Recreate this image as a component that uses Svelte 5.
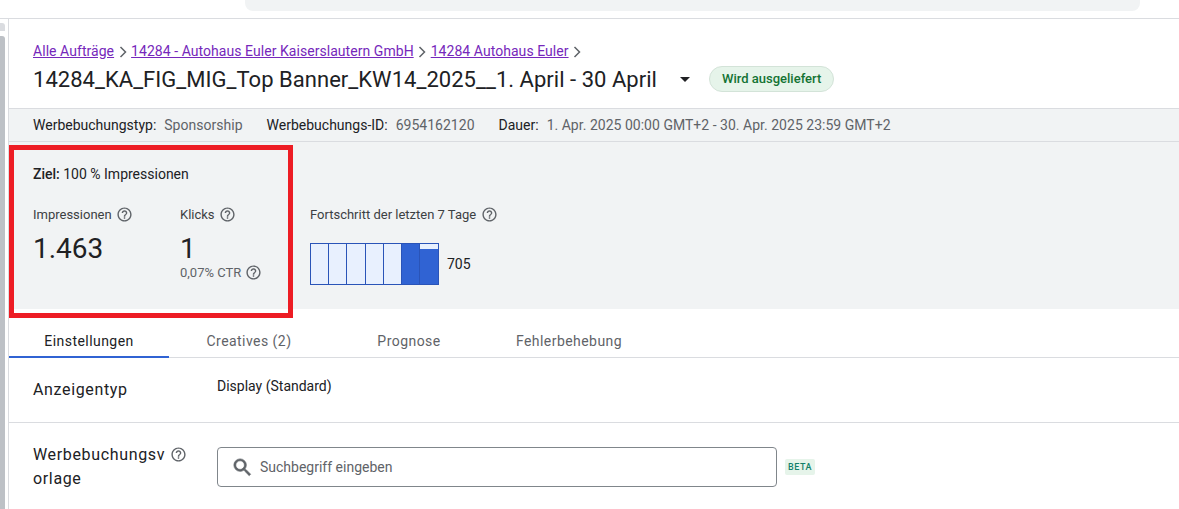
<script lang="ts">
  const crumbs = ["Alle Aufträge", "14284 - Autohaus Euler Kaiserslautern GmbH", "14284 Autohaus Euler"];
  const tabs = ["Einstellungen", "Creatives (2)", "Prognose", "Fehlerbehebung"];
  // last 7 days, share of the bar that is filled
  const days = [0, 0, 0, 0, 0, 100, 87];
</script>

{#snippet help(size = 17)}
  <svg class="help" width={size} height={size} viewBox="0 0 24 24" fill="#5f6368" aria-hidden="true">
    <path d="M11 18h2v-2h-2v2zm1-16C6.48 2 2 6.48 2 12s4.48 10 10 10 10-4.48 10-10S17.52 2 12 2zm0 18c-4.41 0-8-3.59-8-8s3.59-8 8-8 8 3.59 8 8-3.59 8-8 8zm0-14c-2.21 0-4 1.79-4 4h2c0-1.1.9-2 2-2s2 .9 2 2c0 2-3 1.75-3 5h2c0-2.25 3-2.5 3-5 0-2.21-1.79-4-4-4z" />
  </svg>
{/snippet}

<div class="page">
  <div class="topbar"><div class="pill"></div></div>
  <div class="body">
    <div class="rail"><div class="nub"></div><div class="thumb"></div></div>
    <main>
      <header>
        <nav>
          {#each crumbs as c}
            <a href="#top">{c}</a>
            <svg width="12" height="12" viewBox="0 0 12 12" fill="none" stroke="#5f6368" stroke-width="1.5"><path d="M3.5 1 8.5 6l-5 5" /></svg>
          {/each}
        </nav>
        <div class="title-row">
          <h1>14284_KA_FIG_MIG_Top Banner_KW14_2025__1. April - 30 April</h1>
          <span class="caret"></span>
          <span class="status">Wird ausgeliefert</span>
        </div>
      </header>

      <div class="meta">
        <span class="pair"><b>Werbebuchungstyp:</b><i>Sponsorship</i></span>
        <span class="pair"><b>Werbebuchungs-ID:</b><i>6954162120</i></span>
        <span class="pair"><b>Dauer:</b><i>1. Apr. 2025 00:00 GMT+2 - 30. Apr. 2025 23:59 GMT+2</i></span>
      </div>

      <section class="stats">
        <div class="goal">
          <p class="target"><strong>Ziel:</strong> 100 % Impressionen</p>
          <div class="figures">
            <div class="fig imp">
              <div class="fig-label">Impressionen {@render help()}</div>
              <div class="fig-value">1.463</div>
            </div>
            <div class="fig">
              <div class="fig-label">Klicks {@render help()}</div>
              <div class="fig-value">1</div>
              <div class="ctr">0,07% CTR {@render help()}</div>
            </div>
          </div>
        </div>
        <div class="progress">
          <div class="fig-label wide">Fortschritt der letzten 7 Tage {@render help()}</div>
          <div class="chart-row">
            <div class="chart">
              {#each days as d}
                <div class="day"><div class="fill" style="height: {d}%"></div></div>
              {/each}
            </div>
            <span class="count">705</span>
          </div>
        </div>
      </section>

      <div class="tabs">
        {#each tabs as t, i}
          <div class="tab" class:active={i === 0}>{t}</div>
        {/each}
      </div>

      <div class="row first">
        <div class="row-label">Anzeigentyp</div>
        <div class="row-value">Display (Standard)</div>
      </div>
      <div class="row second">
        <div class="row-label">
          Werbebuchungsv <span class="inline-help">{@render help()}</span><br />orlage
        </div>
        <div class="search">
          <svg width="23" height="23" viewBox="0 0 24 24" fill="#5f6368" stroke="#5f6368" stroke-width="0.7"><path d="M15.5 14h-.79l-.28-.27A6.47 6.47 0 0 0 16 9.5 6.5 6.5 0 1 0 9.5 16c1.61 0 3.09-.59 4.23-1.57l.27.28v.79l5 4.99L20.49 19l-4.99-5zm-6 0C7.01 14 5 11.99 5 9.5S7.01 5 9.5 5 14 7.01 14 9.5 11.99 14 9.5 14z" /></svg>
          <span>Suchbegriff eingeben</span>
        </div>
        <span class="beta">BETA</span>
      </div>
    </main>
  </div>
  <div class="callout"></div>
</div>

<style>
  :global(body) { margin: 0; background: #fff; }
  .page {
    position: relative;
    height: 509px;
    overflow: hidden;
    font-family: Roboto, "Liberation Sans", sans-serif;
    font-size: 14px;
    color: #202124;
  }
  .topbar { height: 18px; border-bottom: 1px solid #dadce0; padding-left: 245px; padding-right: 39px; }
  .pill { height: 11px; background: #f1f3f4; border-radius: 0 0 8px 8px; }
  .body { display: flex; height: 490px; }
  .rail { width: 8px; flex: none; display: flex; flex-direction: column; gap: 5px; padding-top: 4px; box-sizing: border-box; }
  .nub { width: 5px; height: 8px; background: #dadce0; border-radius: 0 3px 0 0; }
  .thumb { width: 5px; flex: 1; background: #bdc1c6; border-radius: 0 3px 0 0; }
  main { flex: 1; min-width: 0; border-left: 1px solid #dadce0; }

  header { height: 89px; box-sizing: border-box; padding: 24px 24px 0; }
  nav { display: flex; align-items: center; gap: 2.5px; height: 16px; font-size: 14px; letter-spacing: 0.05px; }
  nav a { color: #7627bb; text-decoration: underline; white-space: nowrap; }
  nav svg { margin-top: 1px; }
  .title-row { display: flex; align-items: center; height: 32px; margin-top: 4px; }
  h1 { margin: 0; font-size: 22px; font-weight: 400; white-space: nowrap; letter-spacing: 0.03px; }
  .caret { width: 0; height: 0; margin: 0 19px 0 23px; border: 5px solid transparent; border-top-color: #202124; border-bottom: 0; }
  .status {
    height: 24px; line-height: 24px; padding: 0 12px;
    background: #e6f4ea; border: 1px solid #d3e3d8; border-radius: 13px;
    color: #137333; font-size: 13px; font-weight: 500;
  }

  .meta {
    display: flex; align-items: center; gap: 24px;
    height: 32px; padding-left: 24px;
    background: #f1f3f4;
    border-top: 1px solid #dadce0; border-bottom: 1px solid #dadce0;
  }
  .pair { display: flex; gap: 8px; }
  .pair b { font-weight: 400; color: #202124; }
  .pair i { font-style: normal; color: #5f6368; letter-spacing: 0.02px; }

  .stats { display: flex; height: 167px; background: #f1f3f4; }
  .goal { width: 277px; flex: none; box-sizing: border-box; padding: 24px 0 0 24px; }
  .target { margin: 0; line-height: 16px; }
  .target strong { font-weight: 500; }
  .figures { display: flex; margin-top: 24px; }
  .fig.imp { width: 147px; }
  .fig-label { display: flex; align-items: center; gap: 4px; height: 16px; font-size: 13px; color: #3c4043; }
  .fig-label.wide { gap: 5px; }
  .fig-value { font-size: 28px; line-height: 36px; margin-top: 9px; }
  .ctr { display: flex; align-items: center; gap: 4px; font-size: 13px; color: #5f6368; height: 16px; margin-top: -3px; }
  .help { flex: none; }
  .progress { padding: 64px 0 0 24px; }
  .chart-row { display: flex; align-items: center; gap: 8px; margin-top: 21px; }
  .chart { display: flex; height: 42px; box-sizing: border-box; border: 1px solid #2a54b8; }
  .day { width: 17px; height: 100%; background: #e8f0fe; border-left: 1px solid #2a54b8; display: flex; align-items: flex-end; }
  .day:first-child { border-left: 0; }
  .day:nth-child(3), .day:last-child { width: 18px; }
  .fill { width: 100%; background: #3063d3; }
  .count { font-size: 14px; }

  .tabs { display: flex; height: 49px; box-sizing: border-box; border-bottom: 1px solid #dadce0; }
  .tab {
    width: 160px; box-sizing: border-box; height: 49px; padding-top: 24px;
    text-align: center; font-size: 14px; font-weight: 450; color: #5f6368; letter-spacing: 0.45px;
  }
  .tab.active { color: #202124; border-bottom: 2px solid #3063d3; }

  .row { display: flex; border-bottom: 1px solid #dadce0; padding-left: 24px; }
  .row.first { height: 64px; }
  .row.second { border-bottom: 0; padding-top: 24px; }
  .row-label { width: 184px; flex: none; font-size: 16px; font-weight: 450; line-height: 24px; letter-spacing: 0.65px; }
  .row.first .row-label { padding-top: 20px; }
  .row.second .row-label { margin-top: -4px; }
  .row-value { padding-top: 20px; line-height: 16px; font-size: 14px; }
  .inline-help { vertical-align: -3px; display: inline-block; line-height: 0; }
  .search {
    display: flex; align-items: center; gap: 6px;
    width: 560px; height: 40px; box-sizing: border-box; padding-left: 13px;
    border: 1px solid #80868b; border-radius: 4px;
    font-size: 14px; color: #5f6368;
  }
  .beta {
    align-self: flex-start; margin: 12px 0 0 8px;
    width: 30px; height: 16px; line-height: 16px; text-align: center;
    background: #e6f4ea; color: #11806a; border-radius: 2px;
    font-size: 9px; font-weight: 500; letter-spacing: 0.5px;
  }

  /* red annotation drawn over the screenshot */
  .callout {
    position: absolute; left: 9px; top: 145px; width: 284px; height: 173px;
    box-sizing: border-box; border: 5px solid #ed1c24;
  }
</style>
